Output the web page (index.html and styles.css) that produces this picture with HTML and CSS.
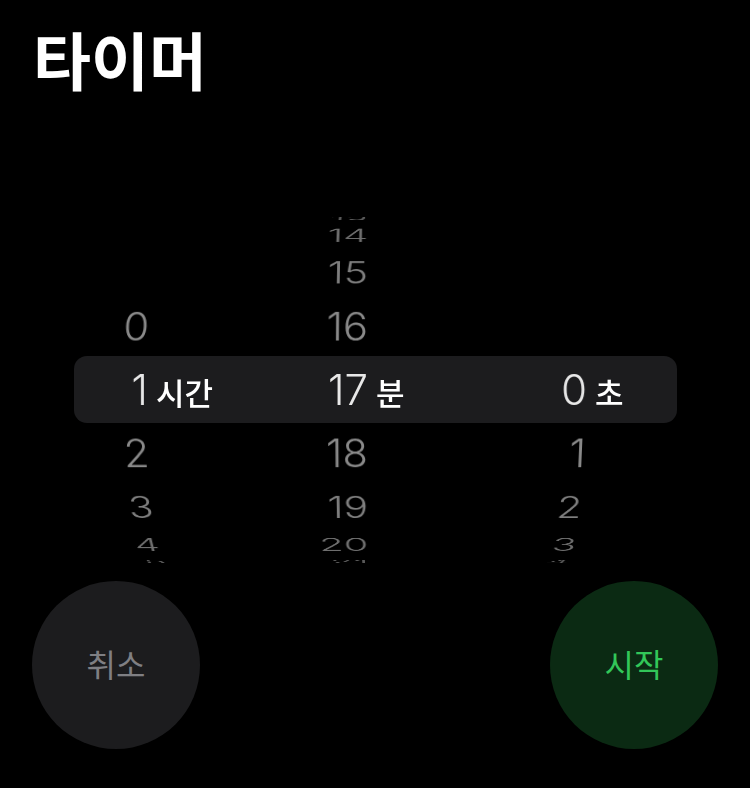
FILE: index.html
```html
<!DOCTYPE html>
<html lang="ko">
<head>
<meta charset="utf-8">
<title>타이머</title>
<link rel="stylesheet" href="styles.css">
</head>
<body>
<div class="screen">
  <h1 class="title">타이머</h1>
  <div class="picker">
    <div class="band"></div>
    <div class="cols">
      <div class="col">
        <div class="wheel">
          <div class="row k1" style="--i:-1">0</div>
          <div class="row k0" style="--i:0">1</div>
          <div class="row k1" style="--i:1">2</div>
          <div class="row k2" style="--i:2">3</div>
          <div class="row k3" style="--i:3">4</div>
          <div class="row k4" style="--i:4">5</div>
        </div>
        <span class="unit">시간</span>
      </div>
      <div class="col">
        <div class="wheel">
          <div class="row k4" style="--i:-4">13</div>
          <div class="row k3" style="--i:-3">14</div>
          <div class="row k2" style="--i:-2">15</div>
          <div class="row k1" style="--i:-1">16</div>
          <div class="row k0" style="--i:0">17</div>
          <div class="row k1" style="--i:1">18</div>
          <div class="row k2" style="--i:2">19</div>
          <div class="row k3" style="--i:3">20</div>
          <div class="row k4" style="--i:4">21</div>
        </div>
        <span class="unit">분</span>
      </div>
      <div class="col">
        <div class="wheel">
          <div class="row k0" style="--i:0">0</div>
          <div class="row k1" style="--i:1">1</div>
          <div class="row k2" style="--i:2">2</div>
          <div class="row k3" style="--i:3">3</div>
          <div class="row k4" style="--i:4">4</div>
        </div>
        <span class="unit">초</span>
      </div>
    </div>
  </div>
  <div class="buttons">
    <div class="btn cancel">취소</div>
    <div class="btn start">시작</div>
  </div>
</div>
</body>
</html>
```
FILE: styles.css
```css
html, body {
  margin: 0;
  padding: 0;
  background: #000;
}
.screen {
  width: 750px;
  height: 788px;
  overflow: hidden;
  background: #000;
  color: #fff;
}
.title {
  margin: 0;
  padding: 23px 0 0 33px;
  font-family: "Noto Sans CJK KR", sans-serif;
  font-weight: 700;
  font-size: 63px;
  line-height: 70px;
  color: #fff;
}
.picker {
  height: 370px;
  margin: 111px 73px 0 74px;
  display: grid;
  perspective: 1700px;
  perspective-origin: 50% 50%;
}
.band,
.cols {
  grid-area: 1 / 1;
  align-self: center;
}
.band {
  height: 67px;
  border-radius: 13px;
  background: #1c1c1e;
}
.cols {
  margin-top: 4px;
  display: grid;
  grid-template-columns: 220px 219px 1fr;
  transform-style: preserve-3d;
}
.col {
  display: flex;
  align-items: baseline;
  transform-style: preserve-3d;
}
.wheel {
  width: 74px;
  height: 48px;
  display: grid;
  transform-style: preserve-3d;
  transform: translateZ(-190px);
}
.row {
  grid-area: 1 / 1;
  text-align: right;
  font-family: Inter, "Liberation Sans", sans-serif;
  font-weight: 300;
  font-size: 42px;
  line-height: 48px;
  transform: rotateX(calc(var(--i) * -19.5deg)) translateZ(191px);
  backface-visibility: hidden;
}
.k0 { color: #e8e8e8; }
.k1 { color: #8a8a8a; }
.k2 { color: #7e7e7e; }
.k3 { color: #6e6e6e; }
.k4 { color: #5a5a5a; }
.unit {
  margin-left: 8px;
  font-family: "Noto Sans CJK KR", sans-serif;
  font-weight: 500;
  font-size: 31px;
  line-height: 48px;
  color: #fff;
}
.buttons {
  display: flex;
  justify-content: space-between;
  padding: 0 32px;
  margin-top: 7px;
}
.btn {
  box-sizing: border-box;
  width: 168px;
  height: 168px;
  padding-bottom: 4px;
  border-radius: 50%;
  display: flex;
  align-items: center;
  justify-content: center;
  font-family: "Noto Sans CJK KR", sans-serif;
  font-weight: 400;
  font-size: 32px;
  line-height: 1;
}
.cancel {
  background: #1c1c1e;
  color: #7f7f83;
}
.start {
  background: #0b2a13;
  color: #32c759;
}
```
